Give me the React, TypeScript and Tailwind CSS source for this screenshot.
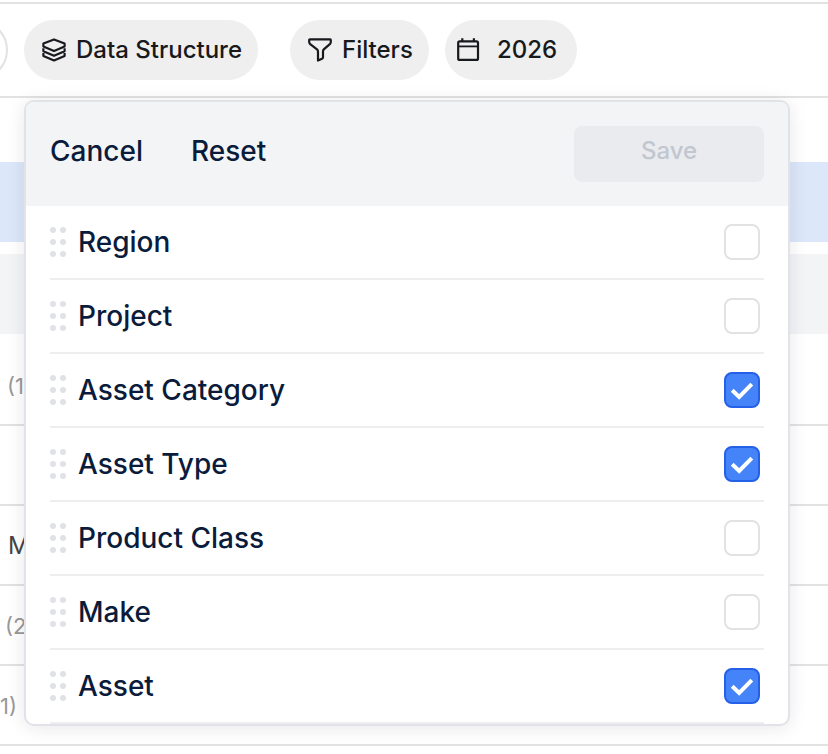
import { useState } from 'react'

interface Level {
  id: string
  label: string
  checked: boolean
}

const initialLevels: Level[] = [
  { id: 'region', label: 'Region', checked: false },
  { id: 'project', label: 'Project', checked: false },
  { id: 'category', label: 'Asset Category', checked: true },
  { id: 'type', label: 'Asset Type', checked: true },
  { id: 'class', label: 'Product Class', checked: false },
  { id: 'make', label: 'Make', checked: false },
  { id: 'asset', label: 'Asset', checked: true },
]

function LayersIcon() {
  return (
    <svg viewBox="0 0 24 24" className="w-6 h-6" fill="none" stroke="currentColor" strokeWidth="2.2" strokeLinejoin="round">
      <path d="M12 1.400 22.600 5.600v3L12 13.100 1.400 8.600v-3Z" />
      <path d="M1.400 10.300v3L12 17.800l10.600-4.500v-3" />
      <path d="M1.400 15v3L12 22.500 22.600 18v-3" />
    </svg>
  )
}

function FunnelIcon() {
  return (
    <svg viewBox="0 0 24 24" className="w-6 h-6" fill="none" stroke="currentColor" strokeWidth="2.2" strokeLinejoin="round">
      <path d="M1.8 1.400h20.400c.4 0 .6.3.6.6v1.900c0 .9-.4 1.600-1 2.200l-6 5.300c-.6.6-.8 1.200-.8 2v5.800c0 .7-.4 1.200-1 1.500L10 22.600v-9.200c0-.8-.4-1.500-1-2L2.200 6.100c-.6-.6-1-1.300-1-2.200V2c0-.3.3-.6.6-.6Z" />
    </svg>
  )
}

function CalendarIcon() {
  return (
    <svg viewBox="0 0 24 24" className="w-6 h-6" fill="none" stroke="currentColor" strokeWidth="2.2">
      <rect x="2.200" y="3.300" width="19.800" height="18.600" rx="1.500" />
      <path d="M2 8.400h20" strokeWidth="1.800" />
      <path d="M6.300 0.300v3M17.900 0.300v3" />
    </svg>
  )
}

function DragHandle() {
  return (
    <span className="grid grid-cols-2 gap-x-1 gap-y-1.5">
      {[0, 1, 2, 3, 4, 5].map((dot) => (
        <span key={dot} className="size-1.5 rounded-full bg-[#e1e2e8]" />
      ))}
    </span>
  )
}

function TableBackdrop() {
  return (
    <div className="text-[22px] leading-none text-[#999]">
      <div className="h-16" />
      <div className="h-20 bg-[#dce7f9]" />
      <div className="h-3" />
      <div className="h-20 bg-[#f3f4f6]" />
      <div className="flex h-[92px] items-center border-b-2 border-[#e2e2e2] pl-[7px] pt-3.5">(1)</div>
      <div className="h-20 border-b-2 border-[#e2e2e2]" />
      <div className="flex h-20 items-center border-b-2 border-[#e2e2e2] pl-2 pt-0.5 text-[24px] text-[#444]">Model</div>
      <div className="flex h-20 items-center border-b-2 border-[#e2e2e2] pl-[5px] pt-0.5">(2)</div>
      <div className="flex h-20 items-center border-b-2 border-[#e2e2e2] pt-0.5">1)</div>
    </div>
  )
}

export default function App() {
  const [levels, setLevels] = useState(initialLevels)

  const toggle = (id: string) =>
    setLevels(levels.map((l) => (l.id === id ? { ...l, checked: !l.checked } : l)))

  return (
    <div className="relative h-[754px] w-[828px] overflow-hidden bg-white font-['Inter',sans-serif]">
      {/* Toolbar */}
      <div className="mt-0.5 flex h-24 items-center border-y-2 border-[#e2e2e2] text-2xl font-medium text-[#17191c]">
        <div className="-ml-[52px] h-[60px] w-[60px] shrink-0 rounded-full border-2 border-[#e2e2e2]" />
        <button className="ml-4 flex h-[60px] w-[234px] items-center gap-[10px] rounded-full bg-[#efefef] pl-[18px]">
          <LayersIcon />
          Data Structure
        </button>
        <button className="ml-8 flex h-[60px] w-[139px] items-center gap-[10px] rounded-full bg-[#efefef] pl-[18px]">
          <FunnelIcon />
          Filters
        </button>
        <button className="ml-4 flex h-[60px] w-[132px] items-center gap-[17px] rounded-full bg-[#efefef] pl-[11px]">
          <CalendarIcon />
          2026
        </button>
      </div>

      <TableBackdrop />

      {/* Data structure menu */}
      <div className="absolute left-6 top-[100px] w-[766px] overflow-hidden rounded-[10px] border-2 border-[#e2e3e9] bg-white text-[28px] text-[#0b1b3b] shadow-[0_2px_18px_rgba(30,30,60,0.1)]">
        <div className="flex h-[104px] items-center bg-[#f3f4f6] px-6 font-medium">
          <button className="pb-1.5">Cancel</button>
          <button className="ml-12 pb-1.5">Reset</button>
          <button disabled className="ml-auto h-14 w-[190px] rounded-lg bg-[#eaebef] pb-1.5 text-2xl text-[#c1c6cf]">
            Save
          </button>
        </div>
        <ul className="px-6">
          {levels.map((level) => (
            <li key={level.id} className="flex h-[74px] items-center border-b-2 border-[#eeeef0] pr-1">
              <DragHandle />
              <span className="ml-3 font-medium">{level.label}</span>
              <button
                role="checkbox"
                aria-checked={level.checked}
                aria-label={level.label}
                onClick={() => toggle(level.id)}
                className={`ml-auto flex size-9 items-center justify-center rounded-lg border-2 ${
                  level.checked ? 'border-[#2560e8] bg-[#4484f8]' : 'border-[#e2e2e2] bg-white'
                }`}
              >
                {level.checked && (
                  <svg viewBox="0 0 32 32" className="size-8 shrink-0" fill="none" stroke="#fff" strokeWidth="4">
                    <path d="M6.200 16.200l7 6.800L25.800 10.200" />
                  </svg>
                )}
              </button>
            </li>
          ))}
        </ul>
      </div>
    </div>
  )
}
